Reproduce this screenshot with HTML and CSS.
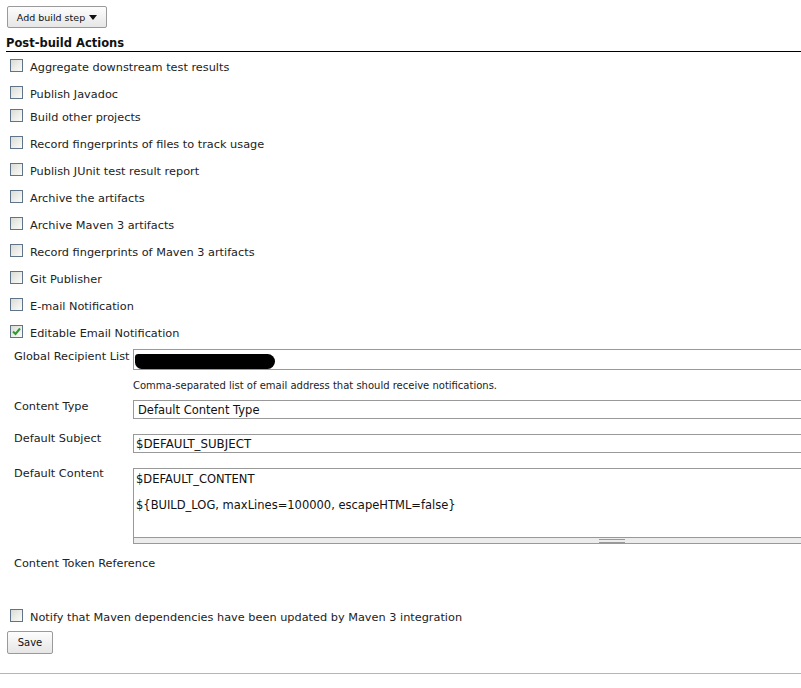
FILE: index.html
```html
<!DOCTYPE html>
<html>
<head>
<meta charset="utf-8">
<link rel="stylesheet" href="styles.css">
</head>
<body>
<div class="page">
  <div class="toolbar">
    <button class="btn btn-drop">Add build step <span class="caret"></span></button>
  </div>
  <h2 class="section">Post-build Actions</h2>
  <ul class="checks">
    <li class="check"><span class="box"></span><span>Aggregate downstream test results</span></li>
    <li class="check"><span class="box"></span><span>Publish Javadoc</span></li>
    <li class="check tight"><span class="box"></span><span>Build other projects</span></li>
    <li class="check"><span class="box"></span><span>Record fingerprints of files to track usage</span></li>
    <li class="check"><span class="box"></span><span>Publish JUnit test result report</span></li>
    <li class="check"><span class="box"></span><span>Archive the artifacts</span></li>
    <li class="check"><span class="box"></span><span>Archive Maven 3 artifacts</span></li>
    <li class="check"><span class="box"></span><span>Record fingerprints of Maven 3 artifacts</span></li>
    <li class="check"><span class="box"></span><span>Git Publisher</span></li>
    <li class="check"><span class="box"></span><span>E-mail Notification</span></li>
    <li class="check"><span class="box checked"><svg viewBox="0 0 13 13" width="13" height="13"><path d="M3 6.5 L5.5 9 L10 3.5" fill="none" stroke="#2e9a2e" stroke-width="2"/></svg></span><span>Editable Email Notification</span></li>
  </ul>
  <div class="form">
    <div class="label l-recip">Global Recipient List</div>
    <div class="field f-recip"><span class="redact"></span></div>
    <div class="label"></div>
    <div class="desc">Comma-separated list of email address that should receive notifications.</div>
    <div class="label l-type">Content Type</div>
    <div class="field f-type">Default Content Type</div>
    <div class="label l-subj">Default Subject</div>
    <div class="field f-subj">$DEFAULT_SUBJECT</div>
    <div class="label l-cont">Default Content</div>
    <div class="area">
      <div class="area-text">
        <p>$DEFAULT_CONTENT</p>
        <p>${BUILD_LOG, maxLines=100000, escapeHTML=false}</p>
      </div>
      <div class="grip"><span class="grip-lines"></span></div>
    </div>
    <div class="label l-token">Content Token Reference</div>
    <div></div>
  </div>
  <ul class="checks last">
    <li class="check"><span class="box"></span><span>Notify that Maven dependencies have been updated by Maven 3 integration</span></li>
  </ul>
  <div class="actions">
    <button class="btn btn-save">Save</button>
  </div>
  <footer class="footer"></footer>
</div>
</body>
</html>
```
FILE: styles.css
```css
html, body {
  margin: 0;
  padding: 0;
  background: #fff;
  overflow: hidden;
}
body {
  width: 801px;
  height: 688px;
  font-family: "DejaVu Sans", Verdana, sans-serif;
  font-size: 11.3px;
  color: #222;
}
.page {
  display: flex;
  flex-direction: column;
}
.toolbar {
  padding: 6px 0 0 7px;
}
.btn {
  font-family: "DejaVu Sans", Verdana, sans-serif;
  font-size: 9.5px;
  color: #111;
  background: linear-gradient(#fdfdfd, #e6e6e6);
  border: 1px solid #9a9a9a;
  border-radius: 2px;
  padding: 0;
  margin: 0;
}
.btn-drop {
  width: 100px;
  height: 22px;
  display: flex;
  align-items: center;
  justify-content: center;
  gap: 4px;
}
.caret {
  width: 0;
  height: 0;
  border-left: 4px solid transparent;
  border-right: 4px solid transparent;
  border-top: 5px solid #111;
}
.section {
  margin: 9px 0 0 6px;
  padding: 0 0 1px 0;
  font-size: 11.5px;
  font-weight: bold;
  color: #111;
  border-bottom: 1px solid #000;
  line-height: 13px;
}
.checks {
  list-style: none;
  margin: 2px 0 0 0;
  padding: 0;
}
.check {
  display: flex;
  align-items: center;
  gap: 7px;
  height: 27px;
  padding-left: 10px;
  color: #222;
  white-space: nowrap;
}
.check.tight {
  margin-top: -4px;
}
.box {
  width: 11px;
  height: 11px;
  border: 1px solid #5f7488;
  background: linear-gradient(135deg, #dcdcd6, #fbfbf9);
  position: relative;
  top: -2px;
  flex: none;
}
.box.checked svg {
  position: absolute;
  left: -1px;
  top: -1px;
}
.form {
  display: grid;
  grid-template-columns: 119px 958px;
  padding-left: 14px;
  margin-top: 2px;
  align-items: start;
}
.label {
  color: #222;
  line-height: 13px;
  white-space: nowrap;
}
.field {
  height: 19px;
  border: 1px solid #999;
  box-sizing: content-box;
  background: #fff;
  line-height: 19px;
  padding-left: 3px;
  font-size: 11.5px;
  color: #111;
}
.l-recip { margin-top: 1px; }
.f-recip {
  display: flex;
  align-items: center;
  padding-left: 1px;
}
.redact {
  display: block;
  width: 140px;
  height: 15px;
  background: #000;
  border-radius: 4px 9px 9px 8px;
  margin-top: 3px;
}
.desc {
  font-size: 10px;
  color: #222;
  margin-top: 10px;
  line-height: 12px;
  white-space: nowrap;
}
.l-type { margin-top: 8px; }
.f-type {
  margin-top: 8px;
  height: 17px;
  line-height: 18px;
  padding-left: 4px;
}
.l-subj { margin-top: 13px; }
.f-subj {
  margin-top: 15px;
  height: 17px;
  line-height: 18px;
  padding-left: 2px;
  font-size: 11.8px;
}
.l-cont { margin-top: 14px; }
.area {
  margin-top: 15px;
  border: 1px solid #999;
  background: #fff;
}
.area-text {
  height: 68px;
  padding: 4px 0 0 2px;
  font-size: 11.5px;
  color: #111;
  box-sizing: border-box;
}
.area-text p {
  margin: 0 0 13px 0;
  line-height: 13px;
}
.grip {
  height: 5px;
  border-top: 1px solid #999;
  background: #ececec;
  display: flex;
  justify-content: center;
  align-items: center;
}
.grip-lines {
  width: 26px;
  height: 2px;
  border-top: 1px solid #999;
  border-bottom: 1px solid #999;
}
.l-token { margin-top: 13px; }
.checks.last {
  margin-top: 37px;
}
.checks.last .check {
  height: 20px;
}
.actions {
  padding: 4px 0 0 7px;
}
.btn-save {
  width: 46px;
  height: 23px;
  font-size: 10px;
}
.footer {
  margin-top: 19px;
  border-top: 1px solid #b5b5b5;
  height: 30px;
}
```
